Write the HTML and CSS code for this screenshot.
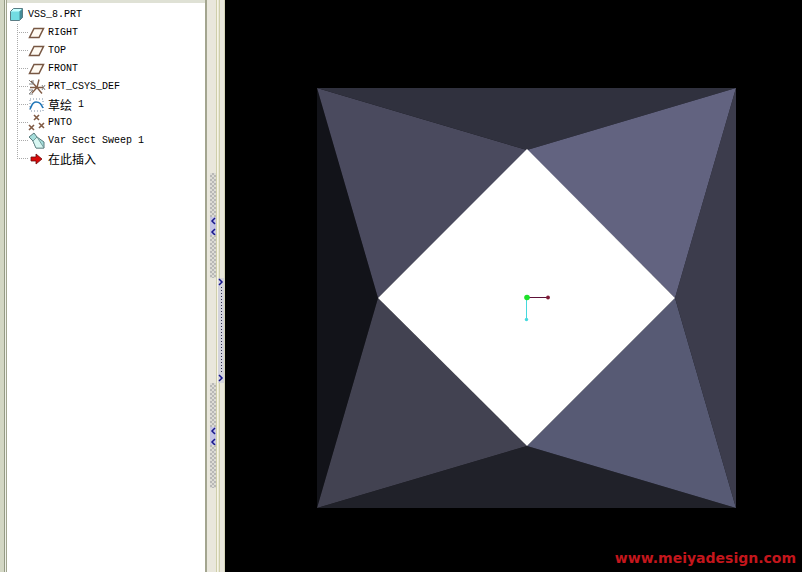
FILE: index.html
```html
<!DOCTYPE html>
<html lang="zh-CN">
<head>
<meta charset="utf-8">
<title>VSS_8.PRT</title>
<link rel="stylesheet" href="styles.css">
</head>
<body>
<main class="app">
  <nav class="panel" aria-label="Model tree">
    <div class="root">
      <svg class="root-icon" width="16" height="16" viewBox="0 0 16 16"><path d="M1.500 4.500l3-3h9v9l-3 3h-9z" fill="#72dce2"/><path d="M1.500 4.500l3-3h9l-3 3z" fill="#c5ffff"/><path d="M10.500 4.500l3-3v9l-3 3z" fill="#448c98"/><path d="M1.500 4.500l3-3h9v9l-3 3h-9z" fill="none" stroke="#5a7c84"/></svg>
      <span>VSS_8.PRT</span>
    </div>
    <ul class="tree">
      <li class="item"><svg class="icon" width="18" height="18" viewBox="0 0 18 18"><path d="M6 4.500H15.500L11 13.500H1.500z" fill="#fffaf2" stroke="#775743" stroke-width="1.500"/></svg><span>RIGHT</span></li>
      <li class="item"><svg class="icon" width="18" height="18" viewBox="0 0 18 18"><path d="M6 4.500H15.500L11 13.500H1.500z" fill="#fffaf2" stroke="#775743" stroke-width="1.500"/></svg><span>TOP</span></li>
      <li class="item"><svg class="icon" width="18" height="18" viewBox="0 0 18 18"><path d="M6 4.500H15.500L11 13.500H1.500z" fill="#fffaf2" stroke="#775743" stroke-width="1.500"/></svg><span>FRONT</span></li>
      <li class="item"><svg class="icon" width="18" height="18" viewBox="0 0 18 18"><path d="M2 9.500h14M9 9.500L3 3M9 9.500l2-8M9 9.500L4 15M9 9.500l5 6" fill="none" stroke="#805b45" stroke-width="1.400"/><path d="M1 2l4 4M5 2v4H1M1 12h4l-4 4h4M14 7l3 5M17 7l-3 5" fill="none" stroke="#858585"/></svg><span>PRT_CSYS_DEF</span></li>
      <li class="item"><svg class="icon" width="18" height="18" viewBox="0 0 18 18"><path d="M2 3h13v12H2z" fill="none" stroke="#7b8ea5" stroke-dasharray="1 2"/><path d="M2 13C4 10 4 6 8 6s5 2 7 6" fill="none" stroke="#2076b8" stroke-width="1.600"/></svg><span class="cjk">草绘</span><span class="number">1</span></li>
      <li class="item"><svg class="icon" width="18" height="18" viewBox="0 0 18 18"><path d="M6 1l5 5M11 1L6 6M1 11l5 5M6 11l-5 5M11 9l5 5M16 9l-5 5" fill="none" stroke="#805b45" stroke-width="1.600"/></svg><span>PNTO</span></li>
      <li class="item"><svg class="icon" width="18" height="18" viewBox="0 0 18 18"><path d="M1 5l5-4 3 4 7 5v6H8L5 9z" fill="#a5dedb" stroke="#597b7d"/><path d="M5 9l4-4 7 11H8z" fill="#d8f7f2" stroke="#597b7d" stroke-width=".7"/></svg><span>Var Sect Sweep 1</span></li>
      <li class="item"><svg class="icon" width="18" height="18" viewBox="0 0 18 18"><path d="M3 7h5V4l6 5-6 5v-3H3z" fill="#d90808" stroke="#690c0c" stroke-width=".8"/></svg><span class="cjk">在此插入</span></li>
    </ul>
  </nav>
  <div class="sash">
    <div class="rail collapse">
      <button class="grip" type="button" aria-label="Collapse tree"><svg width="6" height="18" viewBox="0 0 6 18"><path d="M0 0h6v18H0z" fill="#c4c4e4"/><path d="M5 1L2 4l3 3M5 12l-3 3 3 3" fill="none" stroke="#16168c" stroke-width="1.500"/></svg></button>
      <button class="grip" type="button" aria-label="Collapse panel"><svg width="6" height="18" viewBox="0 0 6 18"><path d="M0 0h6v18H0z" fill="#c4c4e4"/><path d="M5 1L2 4l3 3M5 12l-3 3 3 3" fill="none" stroke="#16168c" stroke-width="1.500"/></svg></button>
    </div>
    <div class="rail expand">
      <button class="expander" type="button" aria-label="Expand panel"><svg width="6" height="9" viewBox="0 0 6 9"><path d="M1 1l3 3-3 3" fill="none" stroke="#16168c" stroke-width="1.500"/></svg><span class="dots"></span><svg width="6" height="9" viewBox="0 0 6 9"><path d="M1 1l3 3-3 3" fill="none" stroke="#16168c" stroke-width="1.500"/></svg></button>
    </div>
  </div>
  <section class="viewport" aria-label="Model view">
    <svg class="model" viewBox="225 0 577 572">
      <path d="M317 88H736L527 150z" fill="#30313e"/>
      <path d="M317 88L378 298L317 508z" fill="#121319"/>
      <path d="M736 88V508L675 298z" fill="#3c3c4c"/>
      <path d="M317 508L527 446L736 508z" fill="#202129"/>
      <path d="M317 88L527 150L378 298z" fill="#4a4a5e"/>
      <path d="M736 88L675 298L527 150z" fill="#626380"/>
      <path d="M317 508L378 298L527 446z" fill="#424251"/>
      <path d="M736 508L527 446L675 298z" fill="#575a74"/>
      <path d="M527 149L675 298L527 446L378 298z" fill="#fff"/>
      <path d="M527 297.500H547" stroke="#5e1238"/>
      <path d="M526.500 298V319" stroke="#45d9dd"/>
      <circle cx="527" cy="297.500" r="2.800" fill="#1de22a"/>
      <circle cx="548" cy="297.500" r="1.900" fill="#801a36"/>
      <circle cx="526.500" cy="319.500" r="1.700" fill="#45d9dd"/>
    </svg>
    <div class="watermark">www.meiyadesign.com</div>
  </section>
</main>
</body>
</html>
```
FILE: styles.css
```css
* {
  box-sizing: border-box;
}

body {
  margin: 0;
  background: #000;
}

.app {
  display: grid;
  grid-template-columns: 205px 20px minmax(0, 1fr);
  grid-template-rows: minmax(0, 1fr);
  height: 100vh;
  overflow: hidden;
}

.panel {
  padding: 3px 0 0 9px;
  background:
    linear-gradient(to right, #d3d7c4 4px, #949a84 4px 5px, #f0f1e9 5px 6px, #a0a58f 6px 7px, transparent 7px),
    linear-gradient(#dfe1d5 3px, #fff 3px);
  border-top: 3px solid transparent;
  background-origin: border-box;
  color: #000;
  font: 10px/18px "Liberation Mono", "Noto Sans CJK SC", monospace;
}

.root {
  display: flex;
  align-items: center;
  gap: 3px;
  height: 18px;
}

.tree {
  margin: 0 0 0 8px;
  padding: 0;
  list-style: none;
}

.item {
  display: flex;
  align-items: center;
  height: 18px;
  background:
    repeating-linear-gradient(to bottom, #aaa 0 1px, transparent 1px 2px) 0 0 / 1px 100% no-repeat,
    repeating-linear-gradient(to right, #aaa 0 1px, transparent 1px 2px) 0 8px / 11px 1px no-repeat;
}

.item:last-child {
  background-size: 1px 9px, 11px 1px;
}

.icon {
  flex: none;
  margin: 0 2px 0 11px;
}

.cjk {
  font-family: "Noto Sans CJK SC", sans-serif;
  font-size: 12px;
}

.number {
  margin-left: 6px;
}

.sash {
  display: flex;
  background: #e9e7dc;
  border-left: 2px solid #a3a58f;
}

.rail {
  display: flex;
  flex-direction: column;
  align-items: center;
}

.collapse {
  flex: 1;
  gap: 105px;
  padding: 173px 0 0 3px;
  border-right: 1px solid #cfcfab;
}

.expand {
  width: 8px;
  padding-top: 278px;
  border-left: 1px solid #f7f5e7;
  border-right: 1px solid #d5d5b8;
  background: linear-gradient(to right, #e9e7d6 1px, #cfcfab 1px 2px, #e9e7dc 2px);
}

.grip,
.expander {
  display: flex;
  flex: none;
  align-items: center;
  width: 6px;
  padding: 0;
  border: 0;
}

.grip {
  justify-content: center;
  height: 105px;
  background: repeating-conic-gradient(#b8b8b6 0 25%, #dddcd5 0 50%) 0 0 / 4px 4px;
}

.expander {
  flex-direction: column;
  height: 105px;
  background: #d4d4dc;
}

.dots {
  flex: 1;
  width: 1px;
  background: repeating-linear-gradient(to bottom, #303050 0 1px, transparent 1px 3px);
}

.viewport {
  position: relative;
  min-width: 0;
  background: #000;
}

.model {
  display: block;
  width: 100%;
  height: 100%;
}

.watermark {
  position: absolute;
  right: 6px;
  bottom: 5px;
  color: #c4161c;
  font: bold 14px/18px "DejaVu Sans", sans-serif;
}
```
